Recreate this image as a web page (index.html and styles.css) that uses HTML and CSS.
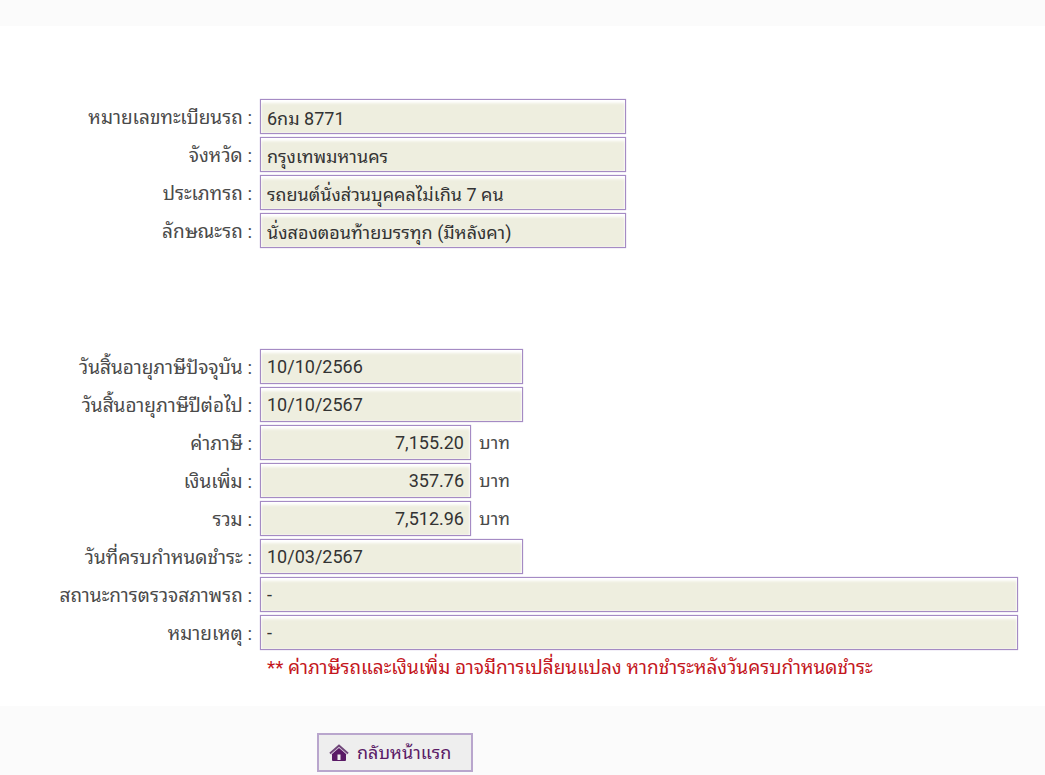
FILE: index.html
```html
<!DOCTYPE html>
<html lang="th">
<head>
    <meta charset="UTF-8">
    <title>ค่าภาษีรถ</title>
    <link rel="stylesheet" href="styles.css">
</head>
<body>
    <form id="taxForm">
        <div class="panel">
            <div class="group">
                <div class="row">
                    <label for="plate_no">หมายเลขทะเบียนรถ :</label>
                    <input class="medium" type="text" id="plate_no" value="6กม 8771" readonly>
                </div>
                <div class="row">
                    <label for="province">จังหวัด :</label>
                    <input class="medium" type="text" id="province" value="กรุงเทพมหานคร" readonly>
                </div>
                <div class="row">
                    <label for="car_type">ประเภทรถ :</label>
                    <input class="medium" type="text" id="car_type" value="รถยนต์นั่งส่วนบุคคลไม่เกิน 7 คน" readonly>
                </div>
                <div class="row">
                    <label for="car_body">ลักษณะรถ :</label>
                    <input class="medium" type="text" id="car_body" value="นั่งสองตอนท้ายบรรทุก (มีหลังคา)" readonly>
                </div>
            </div>

            <div class="group">
                <div class="row">
                    <label for="expire_now">วันสิ้นอายุภาษีปัจจุบัน :</label>
                    <input class="date" type="text" id="expire_now" value="10/10/2566" readonly>
                </div>
                <div class="row">
                    <label for="expire_next">วันสิ้นอายุภาษีปีต่อไป :</label>
                    <input class="date" type="text" id="expire_next" value="10/10/2567" readonly>
                </div>
                <div class="row">
                    <label for="tax">ค่าภาษี :</label>
                    <input class="amount" type="text" id="tax" value="7,155.20" readonly>
                    <span class="unit">บาท</span>
                </div>
                <div class="row">
                    <label for="extra">เงินเพิ่ม :</label>
                    <input class="amount" type="text" id="extra" value="357.76" readonly>
                    <span class="unit">บาท</span>
                </div>
                <div class="row">
                    <label for="total">รวม :</label>
                    <input class="amount" type="text" id="total" value="7,512.96" readonly>
                    <span class="unit">บาท</span>
                </div>
                <div class="row">
                    <label for="due_date">วันที่ครบกำหนดชำระ :</label>
                    <input class="date" type="text" id="due_date" value="10/03/2567" readonly>
                </div>
                <div class="row">
                    <label for="inspection">สถานะการตรวจสภาพรถ :</label>
                    <input class="full" type="text" id="inspection" value="-" readonly>
                </div>
                <div class="row">
                    <label for="remark">หมายเหตุ :</label>
                    <input class="full" type="text" id="remark" value="-" readonly>
                </div>
                <p class="note">** ค่าภาษีรถและเงินเพิ่ม อาจมีการเปลี่ยนแปลง หากชำระหลังวันครบกำหนดชำระ</p>
            </div>
        </div>

        <div class="actions">
            <button type="button">
                <svg width="20" height="18" viewBox="0 0 20 18" aria-hidden="true">
                    <path d="M3 9.5 L10 3.5 L17 9.5 V16 Q17 17 16 17 H4 Q3 17 3 16 Z" fill="#5a1a66"/>
                    <path d="M1 9.5 L10 1.5 L19 9.5" fill="none" stroke="#6f4579" stroke-width="2"/>
                    <path d="M2 10.5 L10 3.5 L18 10.5" fill="none" stroke="#c9b5cf" stroke-width="1"/>
                    <rect x="8.5" y="10.5" width="3" height="5.5" fill="#eeeeee"/>
                </svg>
                กลับหน้าแรก
            </button>
        </div>
    </form>
</body>
</html>
```

FILE: styles.css
```css
/* General Styles */
body {
  margin: 0;
  padding-top: 26px;
  background-color: #fbfbfb;
  color: #4a4a4a;
  font-family: Roboto, "Noto Sans Thai Looped", Loma, sans-serif;
  font-size: 18px;
  line-height: 30px;
}

.panel {
  display: flex;
  flex-direction: column;
  gap: 101px;
  padding: 73px 27px 23px 0;
  background-color: #ffffff;
}

/* Form Rows */
.group {
  display: flex;
  flex-direction: column;
  gap: 3px;
}

.row {
  display: flex;
  align-items: center;
  gap: 8px;
}

label {
  flex: 0 0 252px;
  padding-top: 2px;
  font-size: 19px;
  text-align: right;
  white-space: nowrap;
}

input {
  box-sizing: border-box;
  height: 35px;
  padding: 0 6px;
  border: 1px solid #a58bc4;
  border-radius: 0;
  background-color: #eeeedf;
  box-shadow: inset 0 3px 3px #ffffff, inset 0 0 2px #ffffff, 0 0 1px #b9a3d6;
  color: #333333;
  font-family: inherit;
  font-size: 18px;
}

.medium {
  width: 366px;
}

.date {
  width: 263px;
}

.amount {
  width: 211px;
  text-align: right;
}

.full {
  flex: 1;
}

.note {
  margin: 0;
  padding-left: 267px;
  color: #c4161c;
  font-size: 19px;
}

/* Buttons */
.actions {
  padding: 27px 0 3px 317px;
}

button {
  display: flex;
  align-items: center;
  gap: 8px;
  height: 39px;
  padding: 0 20px 0 10px;
  border: 2px solid #b9a6cd;
  background-color: #eeeeee;
  color: #5a1a66;
  font: inherit;
  cursor: pointer;
}
```
